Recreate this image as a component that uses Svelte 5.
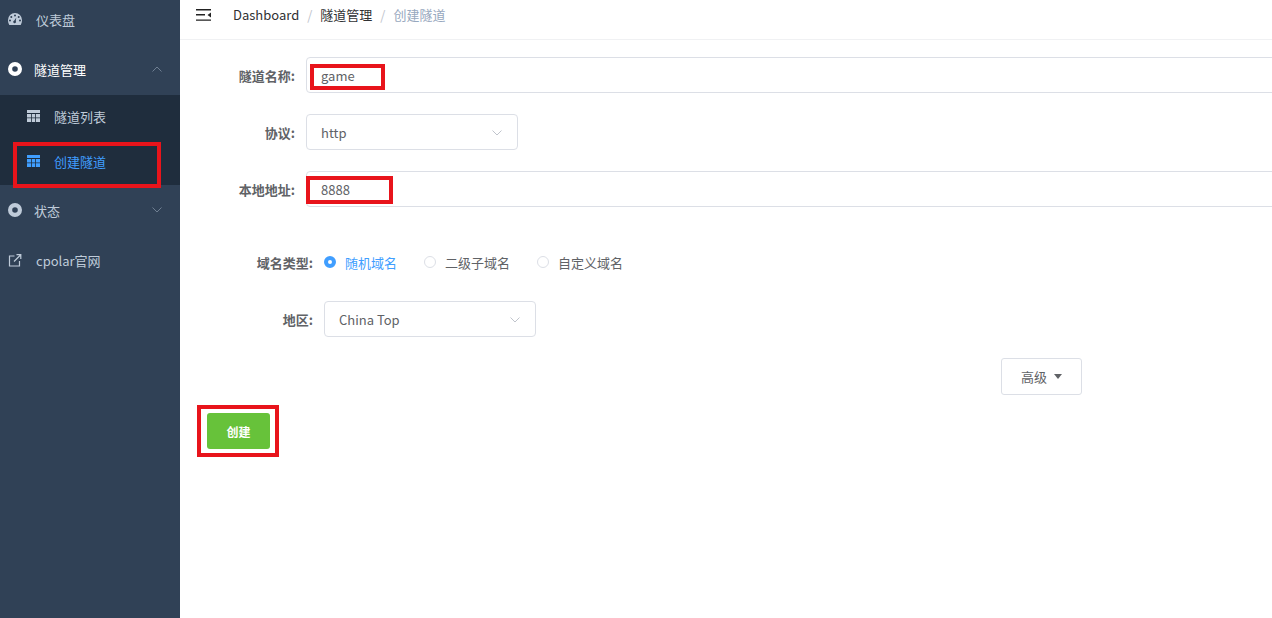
<script lang="ts">
  const regions = ["随机域名", "二级子域名", "自定义域名"];
  const crumbs = ["Dashboard", "隧道管理"];
</script>

{#snippet grid()}
  <svg class="grid-icon" viewBox="0 0 13 12" width="13" height="12">
    <path fill="currentColor" d="M0 0h13v3H0zM0 4h4v3.500H0zM4.800 4h3.400v3.500H4.800zM9 4h4v3.500H9zM0 8.300h4V12H0zM4.800 8.300h3.400V12H4.800zM9 8.300h4V12H9z" />
  </svg>
{/snippet}

{#snippet ring()}
  <svg viewBox="0 0 14 14" width="14" height="14">
    <path fill="currentColor" fill-rule="evenodd" d="M7 0a7 7 0 1 1 0 14A7 7 0 0 1 7 0zm0 4.200a2.800 2.800 0 1 0 0 5.600 2.800 2.800 0 0 0 0-5.600z" />
  </svg>
{/snippet}

{#snippet chevron(up: boolean)}
  <svg class="chev" viewBox="0 0 10 6" width="10" height="6">
    <path fill="none" stroke="currentColor" d={up ? "M.5 5.500 5 1l4.500 4.500" : "M.5.500 5 5 9.500.500"} />
  </svg>
{/snippet}

<div class="app">
  <aside class="sidebar">
    <nav class="menu">
      <div class="item">
        <svg class="lead" viewBox="0 0 14 12" width="14" height="12">
          <path fill="currentColor" fill-rule="evenodd" d="M7 0a7 7 0 0 1 7 7c0 1.900-.5 3.500-1.300 5H1.300C.5 10.500 0 8.900 0 7a7 7 0 0 1 7-7zM7 1.500a1 1 0 1 0 0 2 1 1 0 0 0 0-2zM3.300 3a1 1 0 1 0 0 2 1 1 0 0 0 0-2zM10.700 3a1 1 0 1 0 0 2 1 1 0 0 0 0-2zM2 6.500a1 1 0 1 0 0 2 1 1 0 0 0 0-2zM12 6.500a1 1 0 1 0 0 2 1 1 0 0 0 0-2zM8.300 4.500 6.300 7.400a1.400 1.400 0 1 0 1.500.6z" />
        </svg>
        <span class="name">仪表盘</span>
      </div>
      <div class="item open">
        <span class="lead">{@render ring()}</span>
        <span class="name tight">隧道管理</span>
        {@render chevron(true)}
      </div>
      <div class="submenu">
        <div class="subitem">{@render grid()}<span>隧道列表</span></div>
        <div class="subitem active">{@render grid()}<span>创建隧道</span></div>
      </div>
      <div class="item">
        <span class="lead">{@render ring()}</span>
        <span class="name tight">状态</span>
        {@render chevron(false)}
      </div>
      <div class="item">
        <svg class="lead" viewBox="0 0 13 13" width="13" height="13">
          <path fill="none" stroke="currentColor" stroke-width="1.200" d="M6 2H1v10h10V7M5.500 7.500 12 1M8 .700h4.300V5" />
        </svg>
        <span class="name">cpolar官网</span>
      </div>
    </nav>
  </aside>

  <main class="main">
    <header class="navbar">
      <svg class="hamburger" viewBox="0 0 15 12" width="15" height="12">
        <path fill="#222" d="M0 0h15v1.400H0zM0 5h9v1.400H0zM0 10.400h15v1.400H0zM15 3.500v5l-3.500-2.500z" />
      </svg>
      <div class="crumbs">
        {#each crumbs as c}
          <span class="crumb">{c}</span><span class="sep">/</span>
        {/each}
        <span class="current">创建隧道</span>
      </div>
    </header>

    <form class="form">
      <div class="row">
        <span class="label l1">隧道名称:</span>
        <div class="input wide">game<i class="mark mark-name"></i></div>
      </div>
      <div class="row">
        <span class="label l1">协议:</span>
        <div class="input select">http{@render chevron(false)}</div>
      </div>
      <div class="row">
        <span class="label l1">本地地址:</span>
        <div class="input wide">8888<i class="mark mark-addr"></i></div>
      </div>

      <div class="row radios">
        <span class="label l2">域名类型:</span>
        {#each regions as r, i}
          <span class="radio" class:checked={i === 0}><i class="dot"></i>{r}</span>
        {/each}
      </div>
      <div class="row region">
        <span class="label l2">地区:</span>
        <div class="input select">China Top{@render chevron(false)}</div>
      </div>

      <div class="advanced">
        <button type="button" class="adv-btn">高级<i class="caret"></i></button>
      </div>
      <div class="submit">
        <button type="button" class="create">创建</button>
        <i class="mark mark-create"></i>
      </div>
    </form>
  </main>

  <i class="mark mark-menu"></i>
</div>

<style>
  :global(body) {
    margin: 0;
    background: #fff;
    overflow: hidden;
  }
  .app {
    position: relative;
    display: flex;
    height: 618px;
    overflow: hidden;
    font-family: "Noto Sans CJK SC", "Noto Sans", sans-serif;
    font-size: 13px;
    color: #606266;
  }
  .sidebar {
    flex: 0 0 180px;
    background: #304156;
    color: #bfcbd9;
    overflow: hidden;
  }
  .menu {
    margin-top: -6px;
  }
  .item {
    display: flex;
    align-items: center;
    height: 50px;
    padding: 0 18px 0 8px;
    box-sizing: border-box;
  }
  .lead {
    display: flex;
    flex: 0 0 14px;
    margin-right: 14px;
  }
  .name {
    flex: 1;
  }
  .name.tight {
    margin-left: -2px;
  }
  .item.open {
    color: #fff;
  }
  .item.open .chev,
  .item .chev {
    color: #6f7f92;
  }
  .submenu {
    background: #1f2d3d;
    margin-top: 1px;
  }
  .subitem {
    display: flex;
    align-items: center;
    gap: 14px;
    height: 45px;
    padding-left: 27px;
    padding-bottom: 3px;
    box-sizing: border-box;
  }
  .subitem.active {
    color: #409eff;
  }
  .main {
    flex: 1;
    min-width: 0;
  }
  .navbar {
    display: flex;
    align-items: center;
    height: 40px;
    padding: 0 0 10px 16px;
    box-sizing: border-box;
    border-bottom: 1px solid #f0f1f3;
  }
  .hamburger {
    margin-top: 1px;
  }
  .crumbs {
    display: flex;
    margin-left: 22px;
    color: #303133;
  }
  .sep {
    margin: 0 8px;
    color: #c0c4cc;
  }
  .current {
    color: #97a8be;
  }
  .form {
    padding-top: 17px;
  }
  .row {
    display: flex;
    align-items: center;
    height: 36px;
    margin-bottom: 21px;
  }
  .label {
    font-weight: 700;
    text-align: right;
    white-space: nowrap;
    box-sizing: border-box;
  }
  .l1 {
    flex: 0 0 115px;
    margin-right: 11px;
  }
  .l2 {
    flex: 0 0 133px;
    margin-right: 11px;
  }
  .input {
    position: relative;
    display: flex;
    align-items: center;
    justify-content: space-between;
    height: 36px;
    padding: 0 15px 0 14px;
    box-sizing: border-box;
    border: 1px solid #dcdfe6;
    border-radius: 4px;
  }
  .wide {
    flex: 1;
    margin-right: -4px;
  }
  .select {
    width: 212px;
  }
  .select .chev {
    color: #c0c4cc;
    margin-top: 2px;
  }
  .radios {
    margin-top: 37px;
    margin-bottom: 21px;
    height: 36px;
  }
  .radio {
    display: flex;
    align-items: center;
    gap: 9px;
    margin-right: 27px;
  }
  .dot {
    width: 12px;
    height: 12px;
    box-sizing: border-box;
    border: 1px solid #dcdfe6;
    border-radius: 50%;
  }
  .checked {
    color: #409eff;
  }
  .checked .dot {
    border: 4px solid #409eff;
    background: #fff;
  }
  .advanced {
    display: flex;
    padding-left: 821px;
    margin-bottom: 18px;
  }
  .adv-btn {
    display: flex;
    align-items: center;
    justify-content: center;
    gap: 7px;
    width: 81px;
    height: 37px;
    padding: 0;
    background: #fff;
    border: 1px solid #dcdfe6;
    border-radius: 3px;
    font: inherit;
    color: #606266;
  }
  .caret {
    border: 4px solid transparent;
    border-top: 5px solid #606266;
    border-bottom: 0;
  }
  .submit {
    position: relative;
    padding-left: 27px;
  }
  .create {
    display: block;
    width: 63px;
    height: 36px;
    padding: 0;
    background: #67c23a;
    border: 0;
    border-radius: 3px;
    font: inherit;
    font-weight: 700;
    font-size: 12px;
    color: #fff;
  }
  .mark {
    position: absolute;
    box-sizing: border-box;
    border: 4px solid #e8141b;
    pointer-events: none;
  }
  .mark-menu {
    left: 13px;
    top: 142px;
    width: 148px;
    height: 46px;
  }
  .mark-name {
    left: 3px;
    top: 6px;
    width: 75px;
    height: 26px;
  }
  .mark-addr {
    left: -1px;
    top: 4px;
    width: 87px;
    height: 28px;
  }
  .mark-create {
    left: 17px;
    top: -8px;
    width: 82px;
    height: 52px;
  }
</style>
